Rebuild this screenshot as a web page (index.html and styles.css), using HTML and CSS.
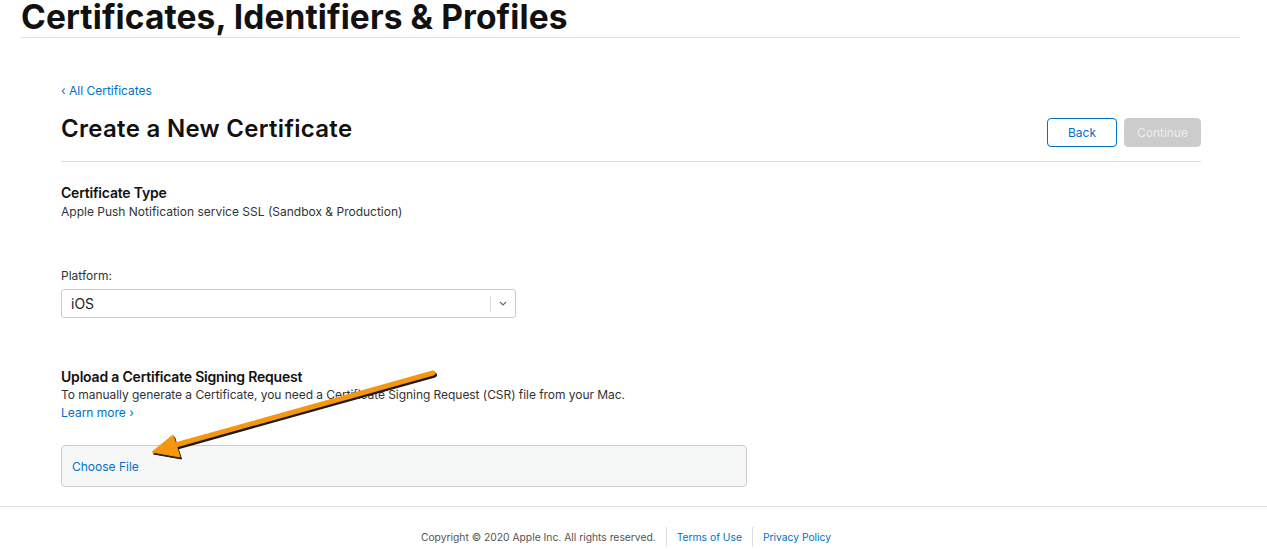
FILE: index.html
```html
<!DOCTYPE html>
<html lang="en">
<head>
<meta charset="utf-8">
<title>Create a New Certificate</title>
<link rel="stylesheet" href="styles.css">
</head>
<body>
<header class="top">
  <h1 class="top-title">Certificates, Identifiers &amp; Profiles</h1>
</header>
<main class="content">
  <a class="back-link" href="#">‹ All Certificates</a>
  <div class="page-head">
    <h2 class="page-title">Create a New Certificate</h2>
    <div class="actions">
      <button class="btn btn-back">Back</button>
      <button class="btn btn-continue" disabled>Continue</button>
    </div>
  </div>
  <section class="sec sec-type">
    <h3 class="sec-title">Certificate Type</h3>
    <p class="sec-text">Apple Push Notification service SSL (Sandbox &amp; Production)</p>
  </section>
  <section class="sec sec-platform">
    <label class="field-label">Platform:</label>
    <div class="select">
      <span class="select-value">iOS</span>
      <span class="select-div"></span>
      <svg class="select-chev" width="8" height="5" viewBox="0 0 8 5"><path d="M1 1l3 3 3-3" fill="none" stroke="#666" stroke-width="1.1"/></svg>
    </div>
  </section>
  <section class="sec sec-upload">
    <h3 class="sec-title">Upload a Certificate Signing Request</h3>
    <p class="sec-text">To manually generate a Certificate, you need a Certificate Signing Request (CSR) file from your Mac.</p>
    <a class="learn" href="#">Learn more ›</a>
    <div class="filebox"><a class="choose" href="#">Choose File</a></div>
  </section>
</main>
<footer class="foot">
  <span class="copy">Copyright © 2020 Apple Inc. All rights reserved.</span>
  <a class="foot-link" href="#">Terms of Use</a>
  <a class="foot-link" href="#">Privacy Policy</a>
</footer>
<svg class="arrow" width="1267" height="549" viewBox="0 0 1267 549">
  <g transform="translate(1.5,2)" fill="#1a1a1a" stroke="#1a1a1a">
    <line x1="433" y1="373" x2="172" y2="446" stroke-width="5" stroke-linecap="round"/>
    <polygon points="152,452 173,435 180,457" stroke-width="1"/>
  </g>
  <g fill="#f6950e" stroke="#f6950e">
    <line x1="433" y1="373" x2="172" y2="446" stroke-width="5" stroke-linecap="round"/>
    <polygon points="152,452 173,435 180,457" stroke-width="1" stroke-linejoin="round"/>
  </g>
</svg>
</body>
</html>
```
FILE: styles.css
```css
* { box-sizing: border-box; }
html, body { margin: 0; padding: 0; }
body {
  width: 1267px;
  height: 549px;
  overflow: hidden;
  position: relative;
  background: #fff;
  font-family: Inter, "Helvetica Neue", "Liberation Sans", sans-serif;
  color: #111;
}
.top {
  margin: 0 27px 0 21px;
  height: 38px;
  border-bottom: 1px solid #e2e2e2;
}
.top-title {
  margin: 0;
  font-size: 33.5px;
  line-height: 34px;
  font-weight: 700;
  letter-spacing: 0.1px;
  color: #111;
}
.content {
  margin: 0 66px 0 61px;
  padding-top: 45px;
}
.back-link {
  display: block;
  font-size: 12px;
  line-height: 16px;
  color: #0070c9;
  text-decoration: none;
}
.page-head {
  display: flex;
  justify-content: space-between;
  align-items: flex-end;
  margin-top: 15px;
  padding-bottom: 13px;
  border-bottom: 1px solid #ddd;
}
.page-title {
  margin: 0;
  font-size: 24px;
  line-height: 30px;
  font-weight: 600;
  letter-spacing: 0.3px;
  margin-bottom: 4px;
}
.actions { display: flex; gap: 7px; margin-bottom: 1px; }
.btn {
  height: 29px;
  border-radius: 4px;
  font-family: inherit;
  font-size: 12px;
  padding: 0;
}
.btn-back {
  width: 70px;
  background: #fff;
  border: 1px solid #0070c9;
  color: #0070c9;
}
.btn-continue {
  width: 77px;
  background: #ccc;
  border: 1px solid #ccc;
  color: #eee;
}
.sec-title {
  margin: 0;
  font-size: 14px;
  line-height: 18px;
  font-weight: 600;
  letter-spacing: -0.2px;
}
.sec-text {
  margin: 1px 0 0;
  font-size: 12px;
  line-height: 18px;
  color: #333;
}
.sec-type { padding-top: 22px; }
.sec-platform { padding-top: 46px; }
.field-label {
  display: block;
  font-size: 12px;
  line-height: 18px;
  color: #333;
}
.select {
  margin-top: 4px;
  width: 455px;
  height: 29px;
  border: 1px solid #ccc;
  border-radius: 3px;
  display: flex;
  align-items: center;
  padding-left: 9px;
}
.select-value { flex: 1; font-size: 14px; color: #222; }
.select-div { width: 1px; height: 16px; background: #ddd; }
.select-chev { margin: 0 8px 0 8px; }
.sec-upload { padding-top: 50px; }
.sec-upload .sec-text { margin-top: 0; letter-spacing: -0.05px; }
.learn {
  display: block;
  font-size: 12px;
  line-height: 18px;
  color: #0070c9;
  text-decoration: none;
}
.filebox {
  margin-top: 23px;
  width: 686px;
  height: 42px;
  background: #f6f8f7;
  border: 1px solid #ccc;
  border-radius: 4px;
  display: flex;
  align-items: center;
  padding-left: 10px;
  padding-top: 1px;
}
.choose {
  font-size: 12px;
  color: #0070c9;
  text-decoration: none;
}
.foot {
  position: absolute;
  left: 0; right: 0; top: 506px;
  border-top: 1px solid #e2e2e2;
  display: flex;
  justify-content: center;
  align-items: center;
  padding-top: 20px;
  padding-right: 5px;
  font-size: 10.3px;
}
.copy { color: #555; padding-right: 10px; line-height: 20px; }
.foot-link {
  color: #0070c9;
  text-decoration: none;
  border-left: 1px solid #ddd;
  padding: 0 10px;
  line-height: 20px;
}
.arrow {
  position: absolute;
  left: 0; top: 0;
  pointer-events: none;
}
```
